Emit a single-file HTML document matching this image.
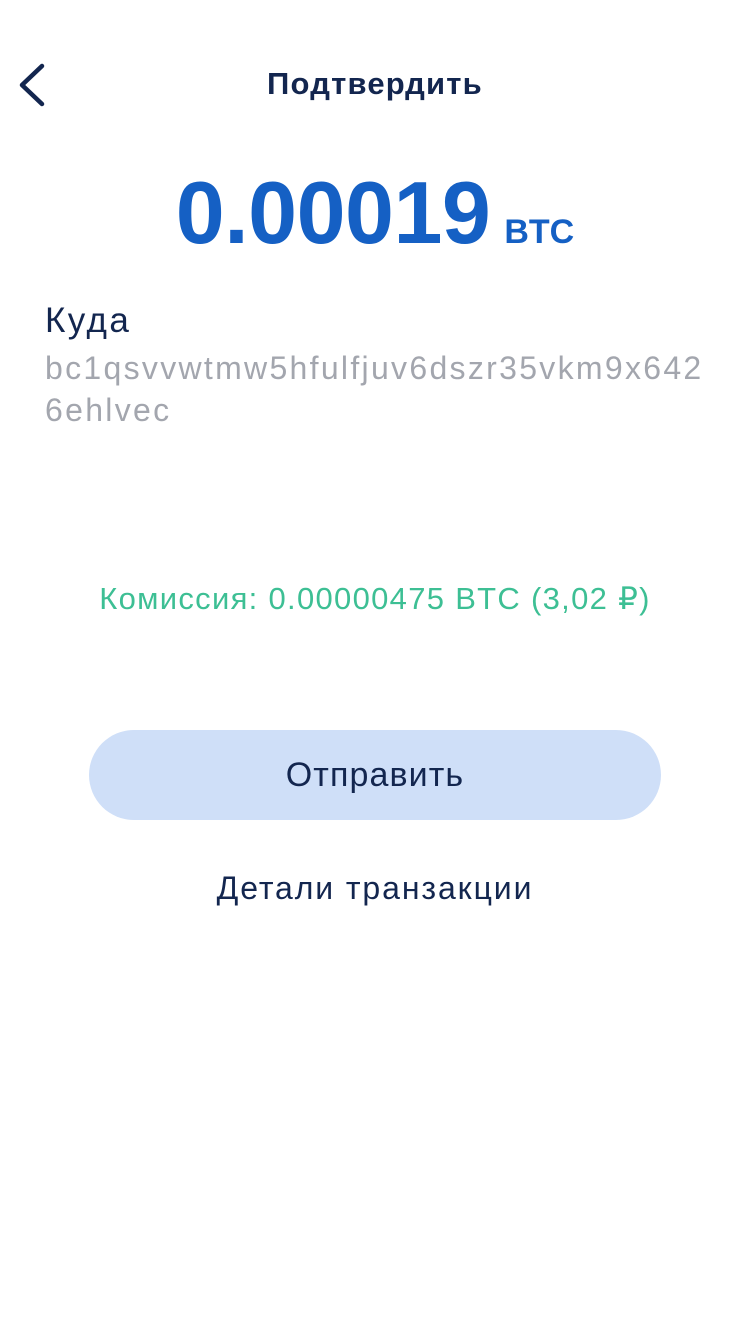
<!DOCTYPE html>
<html><head><meta charset="utf-8"><style>
html,body{margin:0;padding:0;background:#fff;width:750px;height:1334px;overflow:hidden;font-family:"Liberation Sans","Noto Sans CJK SC",sans-serif;position:relative}
.a{position:absolute;white-space:nowrap}
</style></head><body>
<svg class="a" style="left:14px;top:62px" width="36" height="46" viewBox="0 0 36 46"><path d="M28 4 L8 23 L28 42" fill="none" stroke="#13264f" stroke-width="4.5" stroke-linecap="round" stroke-linejoin="round"/></svg>
<div class="a" style="left:0;width:750px;text-align:center;top:66px;font-size:31px;font-weight:bold;color:#13264f;letter-spacing:1.2px">Подтвердить</div>
<div class="a" style="left:0;width:750px;text-align:center;top:162px;color:#1560c4;font-weight:bold"><span style="font-size:88px;letter-spacing:-0.5px">0.00019</span><span style="font-size:34px;margin-left:14px">BTC</span></div>
<div class="a" style="left:45px;top:301px;font-size:35px;color:#13264f;letter-spacing:2.4px">Куда</div>
<div class="a" style="left:45px;top:347px;font-size:32px;color:#a3a6ae;line-height:42px;letter-spacing:2.3px">bc1qsvvwtmw5hfulfjuv6dszr35vkm9x642<br>6ehlvec</div>
<div class="a" style="left:0;width:750px;text-align:center;top:581px;font-size:31px;color:#3dbf94;letter-spacing:1.3px">Комиссия: 0.00000475 BTC (3,02 ₽)</div>
<div class="a" style="left:89px;top:730px;width:572px;height:90px;border-radius:45px;background:#cfdff8;text-align:center;line-height:90px;font-size:34px;color:#13264f;letter-spacing:1.1px">Отправить</div>
<div class="a" style="left:0;width:750px;text-align:center;top:870px;font-size:32px;color:#13264f;letter-spacing:1.9px">Детали транзакции</div>
</body></html>
